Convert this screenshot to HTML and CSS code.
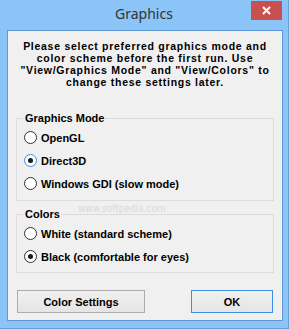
FILE: index.html
```html
<!DOCTYPE html>
<html>
<head>
<meta charset="utf-8">
<link rel="stylesheet" href="styles.css">
</head>
<body>
<div class="window">
  <div class="titlebar">
    <span class="title">Graphics</span>
    <span class="close"><svg width="9" height="9" viewBox="0 0 9 9"><path d="M1 1 L8 8 M8 1 L1 8" stroke="#fff" stroke-width="2" fill="none"/></svg></span>
  </div>
  <div class="client">
    <p class="intro">Please select preferred graphics mode and<br>color scheme before the first run. Use<br>"View/Graphics Mode" and "View/Colors" to<br>change these settings later.</p>
    <fieldset class="group group-mode">
      <legend>Graphics Mode</legend>
      <div class="option"><span class="radio"></span>OpenGL</div>
      <div class="option"><span class="radio checked focus"></span>Direct3D</div>
      <div class="option"><span class="radio"></span>Windows GDI (slow mode)</div>
    </fieldset>
    <fieldset class="group group-colors">
      <legend>Colors</legend>
      <div class="option"><span class="radio"></span>White (standard scheme)</div>
      <div class="option"><span class="radio checked"></span>Black (comfortable for eyes)</div>
    </fieldset>
    <div class="buttons">
      <button class="btn btn-wide">Color Settings</button>
      <button class="btn btn-ok">OK</button>
    </div>
    <span class="watermark">www.softpedia.com</span>
  </div>
</div>
</body>
</html>
```
FILE: styles.css
```css
body {
  margin: 0;
}
.window {
  width: 289px;
  height: 329px;
  box-sizing: border-box;
  background: #8bc4f6;
  border-right: 1px solid #6a9fd6;
  border-bottom: 1px solid #6a9fd6;
  display: flex;
  flex-direction: column;
}
.titlebar {
  position: relative;
  height: 30px;
  display: flex;
  justify-content: center;
  flex-shrink: 0;
}
.title {
  font-family: "Noto Sans", sans-serif;
  font-size: 14px;
  line-height: 20px;
  padding-top: 4px;
  color: #333;
}
.close {
  position: absolute;
  left: 251px;
  top: 1px;
  width: 31px;
  height: 19px;
  background: #c75050;
  display: flex;
  align-items: center;
  justify-content: center;
}
.close svg {
  display: block;
}
.client {
  position: relative;
  margin: 0 5px 7px 7px;
  height: 291px;
  box-sizing: border-box;
  border: 1px solid #5f98d4;
  background: #f0f0f0;
  padding-top: 9px;
  font-family: "Liberation Sans", Arial, sans-serif;
  font-weight: bold;
  font-size: 11px;
  color: #000;
}
.intro {
  margin: 0;
  text-align: center;
  font-size: 10.5px;
  letter-spacing: 0.72px;
  line-height: 12px;
}
.group {
  margin: 24px 8px 0;
  padding: 2px 0 5px;
  border: 1px solid #dcdcdc;
  min-width: 0;
}
.group-colors {
  margin-top: 7px;
  padding-bottom: 4px;
}
.group legend {
  margin-left: 7px;
  padding: 0 1px;
  line-height: 12px;
}
.option {
  height: 23px;
  display: flex;
  align-items: center;
  padding-left: 7px;
  line-height: 12px;
}
.radio {
  width: 13px;
  height: 13px;
  box-sizing: border-box;
  border: 1px solid #333;
  border-radius: 50%;
  background: #fff;
  margin-right: 4px;
  display: flex;
  align-items: center;
  justify-content: center;
  flex-shrink: 0;
}
.radio.focus {
  border-color: #3d8ee0;
}
.radio.checked::after {
  content: "";
  width: 5px;
  height: 5px;
  border-radius: 50%;
  background: #1a1a1a;
}
.buttons {
  margin: 17px 9px 0;
  display: flex;
  justify-content: space-between;
}
.btn {
  height: 23px;
  box-sizing: border-box;
  border: 1px solid #acacac;
  background: linear-gradient(#f0f0f0, #e5e5e5);
  font-family: "Liberation Sans", Arial, sans-serif;
  font-weight: bold;
  font-size: 11px;
  color: #000;
  padding: 0;
  margin: 0;
}
.btn-wide {
  width: 128px;
}
.btn-ok {
  width: 82px;
  border-color: #3d8ee0;
}
.watermark {
  position: absolute;
  left: 70px;
  top: 172px;
  font-family: "DejaVu Sans Condensed", sans-serif;
  font-weight: normal;
  font-size: 10px;
  color: #dadada;
}
```
